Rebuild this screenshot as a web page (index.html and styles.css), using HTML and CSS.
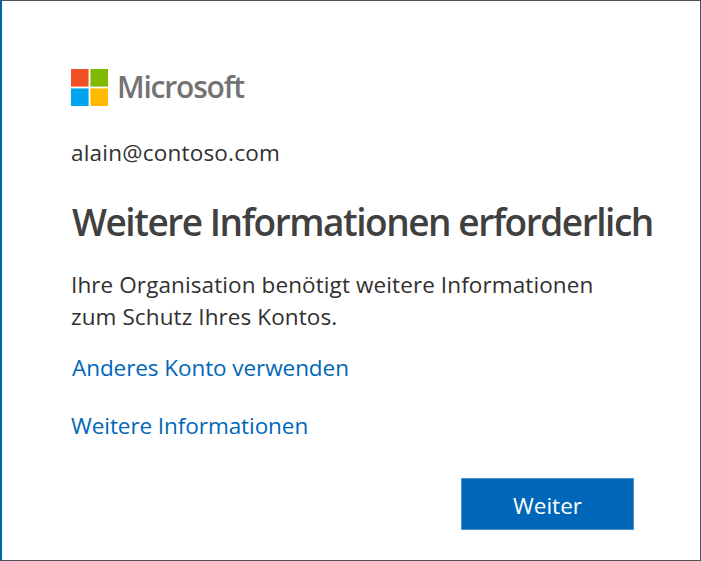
FILE: index.html
```html
<!DOCTYPE html>
<html lang="de">
<head>
<meta charset="utf-8">
<title>Weitere Informationen erforderlich</title>
<link rel="stylesheet" href="styles.css">
</head>
<body>
<main class="dialog">
  <div class="brand">
    <svg class="logo" viewBox="0 0 37 37" aria-hidden="true">
      <path fill="#f25022" d="M0 0h17.6v17.6H0z"/>
      <path fill="#7fba00" d="M19.4 0H37v17.6H19.4z"/>
      <path fill="#00a4ef" d="M0 19.4h17.6V37H0z"/>
      <path fill="#ffb900" d="M19.4 19.4H37V37H19.4z"/>
    </svg>
    <span class="wordmark">Microsoft</span>
  </div>
  <div class="account">alain@contoso.com</div>
  <h1>Weitere Informationen erforderlich</h1>
  <p class="message">Ihre Organisation benötigt weitere Informationen<br>zum Schutz Ihres Kontos.</p>
  <a class="link" href="#">Anderes Konto verwenden</a>
  <a class="link more" href="#">Weitere Informationen</a>
  <button class="next">Weiter</button>
</main>
</body>
</html>
```
FILE: styles.css
```css
* { box-sizing: border-box; }
body { margin: 0; font-family: "Open Sans", "Noto Sans", sans-serif; }
.dialog {
  display: flex;
  flex-direction: column;
  align-items: flex-start;
  height: 561px;
  padding: 67px 0 0 69px;
  border: 1px solid #4d5054;
  border-left: 2px solid #0065a8;
  background: #fff;
  color: #303030;
  font-size: 22.5px;
  line-height: 32px;
  white-space: nowrap;
}
.brand { display: flex; align-items: center; gap: 9px; height: 38px; }
.logo { width: 37px; height: 37px; }
.wordmark { color: #737373; font-size: 30px; font-weight: 600; letter-spacing: -1.2px; }
.account { margin-top: 31px; letter-spacing: 0.22px; }
h1 { margin: 28px 0 0 1px; color: #404040; font-size: 37px; font-weight: 600; line-height: 50px; letter-spacing: -1.46px; }
.message { margin: 22px 0 0; letter-spacing: 0.1px; }
.link { margin: 19px 0 0 1px; color: #0067b8; letter-spacing: -0.07px; text-decoration: none; }
.more { margin: 26px 0 0; }
.next {
  align-self: flex-end;
  width: 173px;
  height: 52px;
  margin: 36px 66px 0 0;
  padding: 3px 0 0;
  border: 1px solid #4a94cd;
  background: #0067b8;
  color: #fff;
  font: inherit;
}
```
